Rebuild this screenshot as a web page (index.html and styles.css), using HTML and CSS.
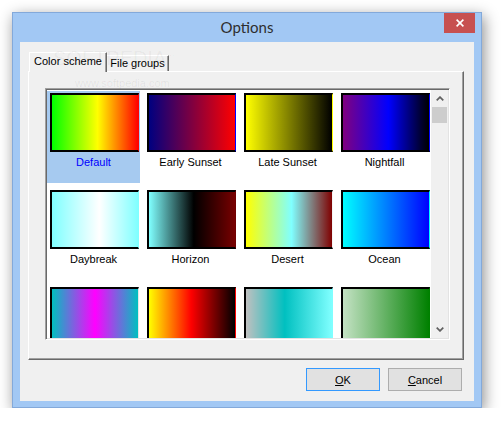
FILE: index.html
```html
<!DOCTYPE html>
<html>
<head>
<meta charset="utf-8">
<link rel="stylesheet" href="styles.css">
</head>
<body>
<div class="window">
  <div class="titlebar">
    <div></div>
    <div class="title">Options</div>
    <div class="close">
      <svg width="8" height="8" viewBox="0 0 8 8"><path d="M0.6 0.6 L7.4 7.4 M7.4 0.6 L0.6 7.4" stroke="#fff" stroke-width="1.6" fill="none"/></svg>
    </div>
  </div>
  <div class="client">
    <div class="wm wm1">SOFTPEDIA<sup>™</sup></div>
    <div class="wm wm2">www.softpedia.com</div>
    <div class="tabs">
      <div class="tab tab-active">Color scheme</div>
      <div class="tab tab-idle">File groups</div>
    </div>
    <div class="panel">
      <div class="listbox">
        <div class="grid">
          <div class="item selected"><div class="swatch g-default"></div><div class="label label-sel">Default</div></div>
          <div class="item"><div class="swatch g-early"></div><div class="label">Early Sunset</div></div>
          <div class="item"><div class="swatch g-late"></div><div class="label">Late Sunset</div></div>
          <div class="item"><div class="swatch g-night"></div><div class="label">Nightfall</div></div>
          <div class="item"><div class="swatch g-day"></div><div class="label">Daybreak</div></div>
          <div class="item"><div class="swatch g-horizon"></div><div class="label">Horizon</div></div>
          <div class="item"><div class="swatch g-desert"></div><div class="label">Desert</div></div>
          <div class="item"><div class="swatch g-ocean"></div><div class="label">Ocean</div></div>
          <div class="item"><div class="swatch g-r3a"></div><div class="label">&nbsp;</div></div>
          <div class="item"><div class="swatch g-r3b"></div><div class="label">&nbsp;</div></div>
          <div class="item"><div class="swatch g-r3c"></div><div class="label">&nbsp;</div></div>
          <div class="item"><div class="swatch g-r3d"></div><div class="label">&nbsp;</div></div>
        </div>
        <div class="scrollbar">
          <div class="sb-btn">
            <svg width="8" height="5" viewBox="0 0 8 5"><path d="M0.7 4.3 L4 1.1 L7.3 4.3" stroke="#606060" stroke-width="1.7" fill="none"/></svg>
          </div>
          <div class="sb-thumb"></div>
          <div class="sb-track"></div>
          <div class="sb-btn">
            <svg width="8" height="5" viewBox="0 0 8 5"><path d="M0.7 0.7 L4 3.9 L7.3 0.7" stroke="#606060" stroke-width="1.7" fill="none"/></svg>
          </div>
        </div>
      </div>
    </div>
    <div class="buttons">
      <button class="btn btn-default"><span><u>O</u>K</span></button>
      <button class="btn"><span><u>C</u>ancel</span></button>
    </div>
  </div>
</div>
</body>
</html>
```
FILE: styles.css
```css
* { box-sizing: border-box; }
body {
  margin: 0;
  background: #ffffff;
  font-family: "Liberation Sans", Arial, sans-serif;
}
.window {
  margin: 12px 0 0 12px;
  width: 470px;
  height: 396px;
  border: 1px solid #83a9da;
  background: #a2c8f4;
  padding: 0 7px 6px 7px;
  display: flex;
  flex-direction: column;
  box-shadow: 2px 4px 14px rgba(0, 0, 0, 0.45);
}
.titlebar {
  height: 29px;
  flex-shrink: 0;
  display: grid;
  grid-template-columns: 1fr auto 1fr;
}
.title {
  font-family: Lato, "Noto Sans", sans-serif;
  font-size: 15px;
  line-height: 29px;
  color: #2e2e2e;
}
.close {
  justify-self: end;
  width: 31px;
  height: 20px;
  margin-right: -1px;
  background: #c75050;
  display: flex;
  align-items: center;
  justify-content: center;
}
.client {
  flex: 1;
  background: #f0f0f0;
  padding: 10px 10px 10px 8px;
  display: flex;
  flex-direction: column;
  position: relative;
}
.wm {
  position: absolute;
  z-index: 3;
  pointer-events: none;
  white-space: nowrap;
}
.wm1 {
  left: 33px;
  top: 6px;
  font-size: 20px;
  line-height: 20px;
  color: rgba(0, 0, 0, 0.045);
}
.wm1 sup { font-size: 8px; vertical-align: top; }
.wm2 {
  left: 55px;
  top: 35px;
  font-size: 11px;
  line-height: 12px;
  color: rgba(0, 0, 0, 0.07);
}
.tabs {
  display: flex;
  align-items: flex-end;
  height: 19px;
  flex-shrink: 0;
  padding-left: 1px;
  position: relative;
  z-index: 1;
}
.tab {
  font-size: 11px;
  color: #000;
  text-align: center;
  white-space: nowrap;
}
.tab-active {
  width: 78px;
  height: 20px;
  margin-bottom: -1px;
  line-height: 16px;
  background: #f0f0f0;
  border-top: 1px solid #ffffff;
  border-left: 1px solid #ffffff;
  border-right: 1px solid #696969;
  box-shadow: inset -1px 0 0 #a0a0a0;
}
.tab-idle {
  width: 62px;
  height: 16px;
  line-height: 15px;
  border-top: 1px solid #ffffff;
  border-right: 1px solid #696969;
  box-shadow: inset -1px 0 0 #a0a0a0;
}
.panel {
  height: 289px;
  flex-shrink: 0;
  border: 1px solid;
  border-color: #ffffff #696969 #696969 #ffffff;
  box-shadow: inset -1px -1px 0 #a0a0a0;
  padding: 16px 0 0 16px;
}
.listbox {
  width: 405px;
  height: 252px;
  border: 1px solid;
  border-color: #a0a0a0 #ffffff #ffffff #a0a0a0;
  box-shadow: inset 1px 1px 0 #696969, inset -1px -1px 0 #e3e3e3;
  padding: 1px;
  background: #ffffff;
  display: flex;
}
.grid {
  width: 384px;
  overflow: hidden;
  display: grid;
  grid-template-columns: repeat(4, 93px);
  grid-auto-rows: 92px;
  column-gap: 4px;
  row-gap: 5px;
  padding-top: 1px;
  align-content: start;
}
.item {
  padding-top: 2px;
}
.item.selected { background: #a6caf0; }
.swatch {
  width: 89px;
  height: 59px;
  margin-left: 3px;
  border: 2px solid #000;
  border-right: 1px solid var(--edge);
}
.label {
  margin-top: 3px;
  line-height: 14px;
  font-size: 11px;
  text-align: center;
  color: #000;
  white-space: nowrap;
}
.label-sel { color: #0000ff; }

.g-default { --edge: #ff0000; background: linear-gradient(to right, #00ff00, #ffff00 53%, #ff0000); }
.g-early { --edge: #0000ff; background: linear-gradient(to right, #000080, #ff0000); }
.g-late { --edge: #ffff00; background: linear-gradient(to right, #ffff00, #000000); }
.g-night { --edge: #0000ff; background: linear-gradient(to right, #800080, #0000ff 53%, #000000); }
.g-day { --edge: #80ffff; background: linear-gradient(to right, #80ffff, #ffffff 55%, #80ffff); }
.g-horizon { --edge: #700000; background: linear-gradient(to right, #80ffff, #000000 52%, #780000); }
.g-desert { --edge: #f4f4f4; background: linear-gradient(to right, #ffff00, #80ffff 53%, #800000); }
.g-ocean { --edge: #00ffff; background: linear-gradient(to right, #00ffff, #0000ff); }
.g-r3a { --edge: #e6e6e6; background: linear-gradient(to right, #00c0c0, #ff00ff 50%, #00c0c0); }
.g-r3b { --edge: #ff0000; background: linear-gradient(to right, #ffff00, #ff0000 49%, #000000); }
.g-r3c { --edge: #80ffff; background: linear-gradient(to right, #c0c0c0, #00c0c0 45%, #80ffff); }
.g-r3d { --edge: #008000; background: linear-gradient(to right, #c4e2c4, #008000); }

.scrollbar {
  width: 17px;
  background: #f0f0f0;
  display: flex;
  flex-direction: column;
}
.sb-btn {
  height: 17px;
  flex-shrink: 0;
  display: flex;
  align-items: center;
  justify-content: center;
}
.sb-thumb {
  height: 16px;
  width: 15px;
  margin-left: 1px;
  flex-shrink: 0;
  background: #cdcdcd;
}
.sb-track { flex: 1; }

.buttons {
  display: flex;
  justify-content: flex-end;
  gap: 8px;
  margin-top: 8px;
  margin-right: 2px;
  flex-shrink: 0;
}
.btn {
  width: 74px;
  height: 23px;
  margin: 0;
  padding: 0;
  border: 1px solid #adadad;
  background: #e1e1e1;
  font-family: "Liberation Sans", Arial, sans-serif;
  font-size: 11px;
  color: #000;
  display: flex;
  align-items: center;
  justify-content: center;
}
.btn-default { border-color: #3399ff; }
```
